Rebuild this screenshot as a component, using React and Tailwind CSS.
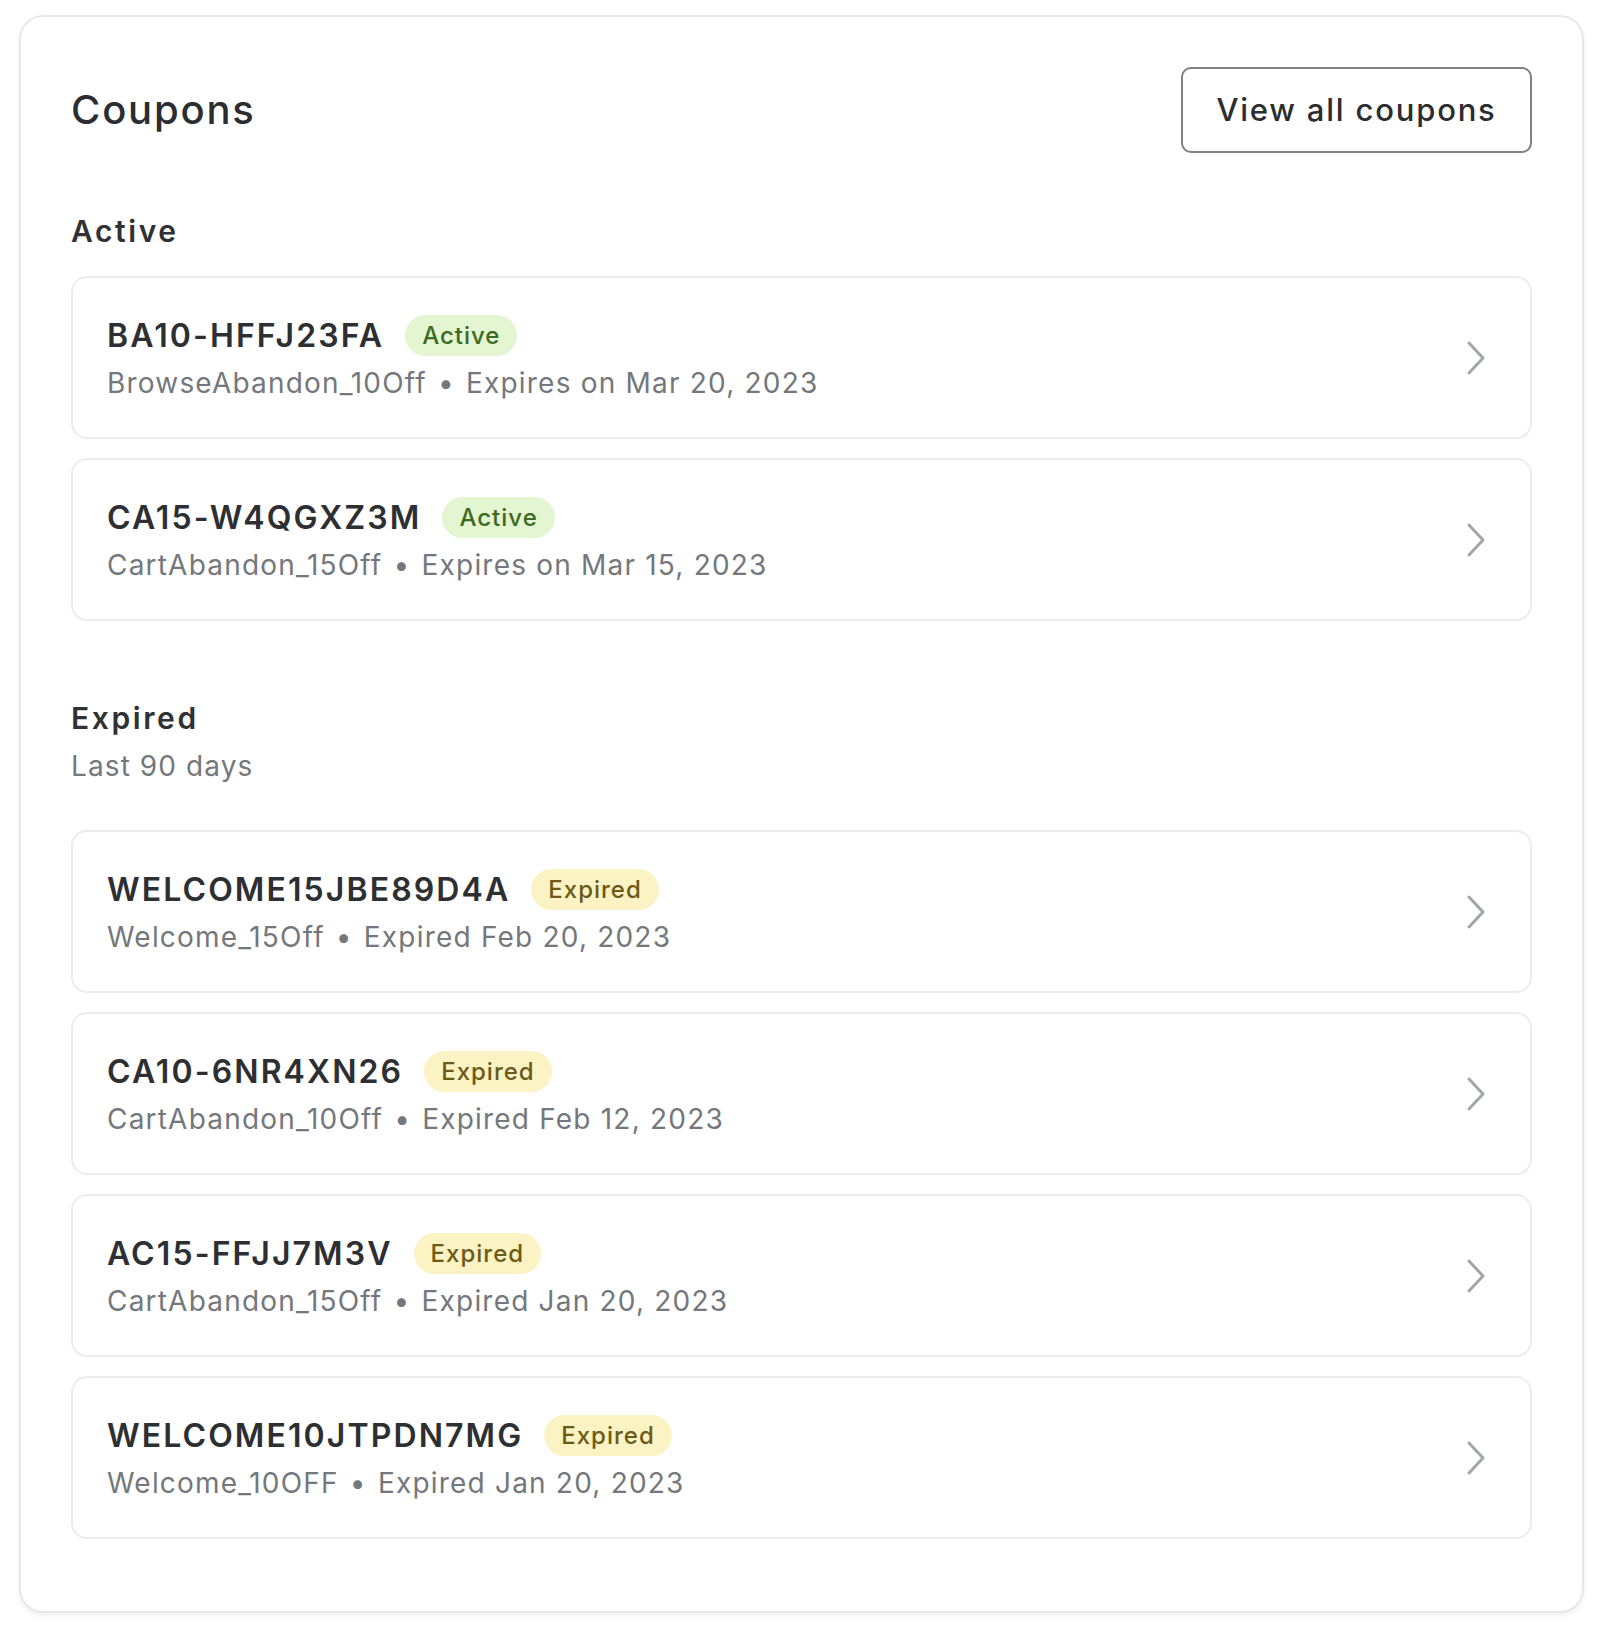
const active = [
  { code: 'BA10-HFFJ23FA', name: 'BrowseAbandon_10Off', date: 'Expires on Mar 20, 2023' },
  { code: 'CA15-W4QGXZ3M', name: 'CartAbandon_15Off', date: 'Expires on Mar 15, 2023' },
];

const expired = [
  { code: 'WELCOME15JBE89D4A', name: 'Welcome_15Off', date: 'Expired Feb 20, 2023' },
  { code: 'CA10-6NR4XN26', name: 'CartAbandon_10Off', date: 'Expired Feb 12, 2023' },
  { code: 'AC15-FFJJ7M3V', name: 'CartAbandon_15Off', date: 'Expired Jan 20, 2023' },
  { code: 'WELCOME10JTPDN7MG', name: 'Welcome_10OFF', date: 'Expired Jan 20, 2023' },
];

function Chevron() {
  return (
    <svg width="20" height="36" viewBox="0 0 20 36" fill="none" className="shrink-0">
      <path d="M3 3 L17 18 L3 33" stroke="#a2a5a9" strokeWidth="3" strokeLinecap="round" strokeLinejoin="round" />
    </svg>
  );
}

function CouponRow({ coupon, status }) {
  const badge =
    status === 'active'
      ? 'bg-[#e3f5d1] text-[#3d6a22]'
      : 'bg-[#fbf3c3] text-[#6c5a16]';
  return (
    <div className="h-[163px] rounded-[16px] border-2 border-[#ececee] bg-white pl-[34px] pr-[44px] flex items-center justify-between">
      <div>
        <div className="flex items-center gap-[21px] leading-[41px]">
          <span className="text-[32px] font-semibold text-[#2d2f33] tracking-[2.1px]">{coupon.code}</span>
          <span className={`h-[41px] px-[17px] rounded-full text-[24px] font-medium tracking-[1px] flex items-center ${badge}`}>
            {status === 'active' ? 'Active' : 'Expired'}
          </span>
        </div>
        <div className="mt-[9px] text-[28px] leading-[36px] tracking-[1.2px] text-[#74777b]">
          {coupon.name} <span className="mx-[2px]">•</span> {coupon.date}
        </div>
      </div>
      <Chevron />
    </div>
  );
}

export default function App() {
  return (
    <div className="min-h-screen bg-white pl-[19px] pt-[15px]" style={{ fontFamily: 'Inter, "Noto Sans", sans-serif' }}>
      <div className="w-[1565px] rounded-[24px] border-2 border-[#e8e8ea] bg-white shadow-[0_3px_5px_rgba(0,0,0,0.06)] px-[50px] pt-[50px] pb-[72px]">
        <div className="flex items-center justify-between">
          <h1 className="text-[40px] leading-[48px] font-medium tracking-[1.8px] text-[#2b2d30]">Coupons</h1>
          <button className="h-[86px] w-[351px] rounded-[10px] border-2 border-[#7e8084] bg-white text-[31px] font-medium tracking-[1.8px] text-[#2b2d30]">
            View all coupons
          </button>
        </div>

        <h2 className="mt-[60px] text-[30px] leading-[36px] font-semibold tracking-[2.6px] text-[#2f3134]">Active</h2>
        <div className="mt-[27px] flex flex-col gap-[19px]">
          {active.map((c) => (
            <CouponRow key={c.code} coupon={c} status="active" />
          ))}
        </div>

        <h2 className="mt-[79px] text-[30px] leading-[36px] font-semibold tracking-[2.6px] text-[#2f3134]">Expired</h2>
        <p className="mt-[12px] text-[28px] leading-[36px] tracking-[1.1px] text-[#74777b]">Last 90 days</p>
        <div className="mt-[46px] flex flex-col gap-[19px]">
          {expired.map((c) => (
            <CouponRow key={c.code} coupon={c} status="expired" />
          ))}
        </div>
      </div>
    </div>
  );
}
